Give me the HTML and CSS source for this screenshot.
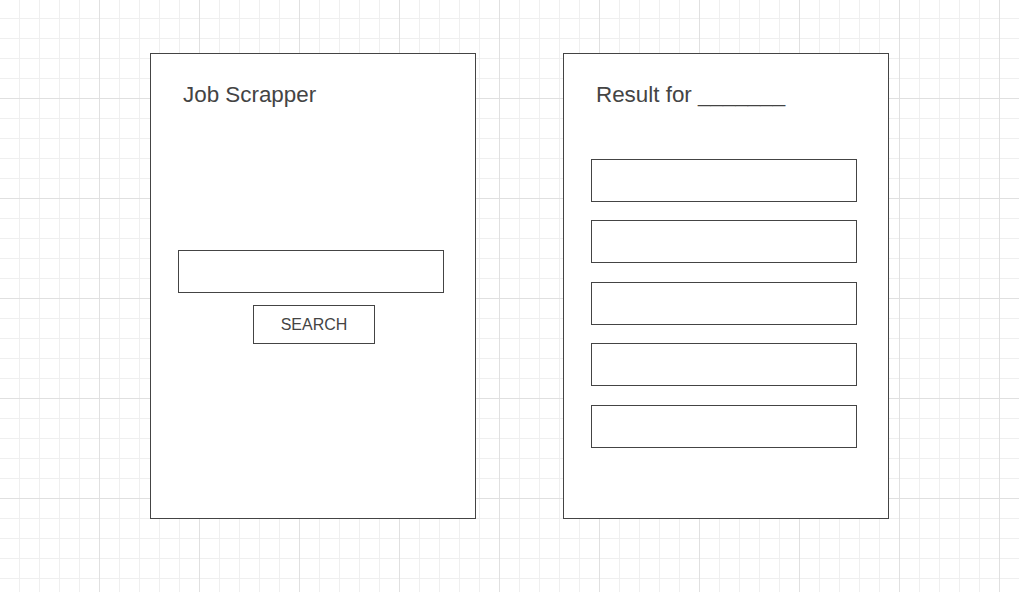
FILE: index.html
```html
<!DOCTYPE html>
<html lang="en">
<head>
<meta charset="utf-8"/>
<title>Job Scrapper</title>
<link rel="stylesheet" href="styles.css">
</head>
<body>
<div class="board">
  <div class="panel">
    <h1 class="titulo">Job Scrapper</h1>
    <input class="campo" type="text"/>
    <button class="botao">SEARCH</button>
  </div>
  <div class="panel">
    <h1 class="titulo">Result for _______</h1>
    <div class="lista">
      <div class="item"></div>
      <div class="item"></div>
      <div class="item"></div>
      <div class="item"></div>
      <div class="item"></div>
    </div>
  </div>
</div>
</body>
</html>
```

FILE: styles.css
```css
html, body {
  margin: 0;
  height: 100%;
}
body {
  font-family: "Liberation Sans", Arial, sans-serif;
  color: #444;
  background-color: #fff;
  background-image:
    linear-gradient(to right, transparent 99px, #e0e0e0 99px),
    linear-gradient(to bottom, transparent 98px, #e0e0e0 98px, #e0e0e0 99px, transparent 99px),
    linear-gradient(to right, transparent 19px, #efefef 19px),
    linear-gradient(to bottom, transparent 18px, #efefef 18px, #efefef 19px, transparent 19px);
  background-size: 100px 100px, 100px 100px, 20px 20px, 20px 20px;
}
.board {
  display: flex;
  gap: 87px;
  padding: 53px 0 0 150px;
}
.panel {
  box-sizing: border-box;
  width: 326px;
  height: 466px;
  background: #fff;
  border: 1px solid #444;
  display: flex;
  flex-direction: column;
}
.titulo {
  margin: 28px 0 0 32px;
  font-size: 22.4px;
  font-weight: normal;
  line-height: 26px;
}
.campo {
  box-sizing: border-box;
  width: 266px;
  height: 43px;
  margin: 142px 0 0 27px;
  border: 1px solid #444;
  border-radius: 0;
  background: #fff;
  padding: 0 10px;
  font-size: 16px;
}
.botao {
  box-sizing: border-box;
  width: 122px;
  height: 39px;
  margin: 12px 0 0 102px;
  border: 1px solid #444;
  border-radius: 0;
  background: #fff;
  color: #444;
  font-family: "Liberation Sans", Arial, sans-serif;
  font-size: 16px;
  padding: 0;
  cursor: pointer;
}
.lista {
  display: flex;
  flex-direction: column;
  gap: 18px;
  margin: 51px 0 0 27px;
}
.item {
  box-sizing: border-box;
  width: 266px;
  height: 43px;
  border: 1px solid #444;
}
.item:nth-child(3), .item:nth-child(5) {
  margin-top: 1px;
}
```
